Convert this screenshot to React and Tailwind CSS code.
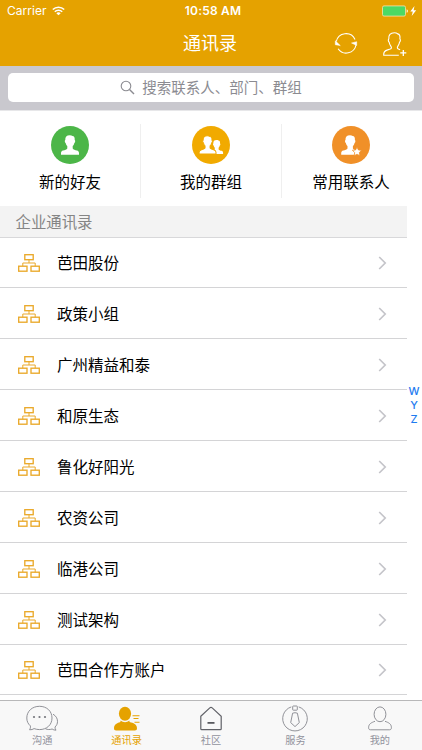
import React from "react";

const departments = ["芭田股份", "政策小组", "广州精益和泰", "和原生态", "鲁化好阳光", "农资公司", "临港公司", "测试架构", "芭田合作方账户"];

const personPath =
  "M18.800 9.300c-3.300 0-4.700 1.700-4.500 4.700-.8.200-.6 2.600.4 3 .2 1.500.8 2.400 1.600 3.100v2.300c-.6 1.100-2.400 1.500-4.200 2-1.400.4-2.100 1.100-2.100 2.700v1.600h18v-1.600c0-1.600-.7-2.300-2.100-2.700-1.800-.5-3.600-.9-4.200-2v-2.300c.8-.7 1.400-1.600 1.600-3.100 1-.4 1.200-2.800.4-3 .2-2.700-.6-3.900-2.200-4-.6-.5-1.500-.7-2.700-.7z";

function StatusBar() {
  return (
    <div className="flex h-[22px] items-center pl-[7px] pr-[5px] text-white">
      <div className="flex w-[161px] items-center">
        <span className="text-[12px] leading-[22px] tracking-[0.050px]">Carrier</span>
        <svg className="ml-[5px]" width="13" height="10" viewBox="0 0 13 10" fill="none" stroke="white" strokeWidth="1.6">
          <path d="M.8 3.500a8.200 8.200 0 0 1 11.400 0" />
          <path d="M2.800 5.700a5.300 5.300 0 0 1 7.400 0" />
          <path d="M6.500 9.300 4.300 7.200a3.200 3.200 0 0 1 4.400 0z" fill="white" stroke="none" />
        </svg>
      </div>
      <span className="w-[90px] text-center text-[12px] font-semibold leading-[22px] tracking-[0.200px]">10:58 AM</span>
      <svg className="ml-auto" width="35" height="12" viewBox="0 0 35 12">
        <rect x=".5" y=".9" width="23" height="10.200" rx="1.500" fill="#4cd964" stroke="#f6e2b0" strokeWidth=".8" />
        <path d="M24.700 4.200c1.500.3 1.500 3.200 0 3.600z" fill="white" />
        <path d="M32.500 1 28.300 6.600h2.500l-1.100 4.400 4.500-5.700h-2.600z" fill="white" />
      </svg>
    </div>
  );
}

function Header() {
  return (
    <header className="h-[66px] bg-[#e5a200]">
      <StatusBar />
      <div className="flex h-[44px] items-center pr-[15px]">
        <div className="w-[114px]" />
        <h1 className="w-[192px] text-center text-[18px] leading-[42px] text-white">通讯录</h1>
        <svg className="ml-[28px]" width="24" height="24" viewBox="0 0 24 24" fill="none" stroke="white" strokeWidth="1.100">
          <path d="M2.300 9.500A9.900 9.900 0 0 1 21 7.400" />
          <path d="M22 13a9.900 9.900 0 0 1-17.900 3.700" />
          <path d="M1.300 8.800v3.900l5 .9zM22.700 13.400v-3.700l-5.200 1.300z" fill="white" strokeWidth=".5" />
        </svg>
        <svg className="ml-auto" width="25" height="26" viewBox="0 0 25 26" fill="none" stroke="white" strokeWidth="1.100">
          <path d="M16.800 24.200H1.700c-.2-3.200.6-4.300 3.300-5.100l3.200-1c1.400-.5 1.600-1.600.6-3-1-1.400-1.500-2.600-1.600-3.900-1.100-.9-1.100-2.500-.4-3.300-.4-3.700 1.500-6.200 5.500-6.200 1.800 0 2.700.4 3.400 1.200 1.900.4 2.600 2.300 2.200 5 .7.800.7 2.400-.4 3.300-.1 1.300-.6 2.500-1.600 3.900-.9 1.400-.7 2.500.6 3l1.600.7" />
          <path d="M21.300 18.900v6M18.300 21.900h6" strokeWidth="1.300" />
        </svg>
      </div>
    </header>
  );
}

function SearchBar() {
  return (
    <div className="h-[44px] bg-[#c9c8ce] pl-[8px] pr-[8px] pt-[7px]">
      <div className="flex h-[29px] items-center justify-center rounded-[5px] bg-white text-[#8b8b91]">
        <svg width="15" height="15" viewBox="0 0 15 15" fill="none" stroke="currentColor" strokeWidth="1.100">
          <circle cx="6" cy="6" r="4.800" />
          <path d="m9.500 9.500 4.500 4.500" strokeWidth="1.400" />
        </svg>
        <span className="ml-[7px] text-[14.500px] leading-[28px]">搜索联系人、部门、群组</span>
      </div>
    </div>
  );
}

function Shortcut({ kind, label }) {
  return (
    <div className="flex w-[140px] flex-col items-center">
      {kind === "friend" && (
        <svg width="38" height="38" viewBox="0 0 38 38">
          <circle cx="19" cy="19" r="19" fill="#4cb648" />
          <path d={personPath} fill="white" />
        </svg>
      )}
      {kind === "group" && (
        <svg width="38" height="38" viewBox="0 0 38 38">
          <circle cx="19" cy="19" r="19" fill="#f1aa00" />
          <path d={personPath} fill="white" transform="translate(11.200 7.500) scale(.71)" />
          <path d={personPath} fill="white" stroke="#f1aa00" strokeWidth="1.100" transform="translate(-2.300 1) scale(.94)" />
        </svg>
      )}
      {kind === "frequent" && (
        <svg width="38" height="38" viewBox="0 0 38 38">
          <circle cx="19" cy="19" r="19" fill="#f09028" />
          <path d={personPath} fill="white" transform="translate(-.8 0)" />
          <path d="m25 21 1.400 2.900 3.200.4-2.300 2.200.6 3.200-2.900-1.500-2.800 1.500.5-3.200-2.300-2.200 3.200-.4z" fill="white" stroke="#f09028" strokeWidth=".8" />
        </svg>
      )}
      <span className="mt-[7px] text-[15.500px] leading-[24px] text-black">{label}</span>
    </div>
  );
}

function Shortcuts() {
  return (
    <div className="flex h-[96px] border-t border-[#e7e7e9] bg-white pt-[15px]">
      <Shortcut kind="friend" label="新的好友" />
      <div className="-mt-[2px] h-[74px] w-px bg-[#efefef]" />
      <Shortcut kind="group" label="我的群组" />
      <div className="-mt-[2px] h-[74px] w-px bg-[#efefef]" />
      <div className="-ml-[1px]">
        <Shortcut kind="frequent" label="常用联系人" />
      </div>
    </div>
  );
}

function DepartmentRow({ name }) {
  return (
    <div className="flex h-[50.880px] items-center border-b border-[#d4d4d6] pl-[18px] pr-[20px] pt-[2px]">
      <svg width="22" height="18" viewBox="0 0 22 18" fill="none" stroke="#eaa92a" strokeWidth="1.350">
        <rect x="6.800" y=".7" width="8.400" height="5" />
        <rect x=".7" y="12.200" width="8.300" height="5" />
        <rect x="13" y="12.200" width="8.300" height="5" />
        <path d="M11 5.700V9M4.800 12.200V9h12.400v3.200" strokeWidth="1" />
      </svg>
      <span className="ml-[17px] pt-[2px] text-[15.500px] leading-[24px] text-black">{name}</span>
      <svg className="ml-auto" width="9" height="14" viewBox="0 0 9 14" fill="none" stroke="#c4c4c9" strokeWidth="1.700">
        <path d="m1.200 1 6 6-6 6" />
      </svg>
    </div>
  );
}

function TabItem({ label, active, children }) {
  return (
    <div className="flex flex-1 flex-col items-center pt-[4px]">
      <svg width="34" height="28" viewBox="0 0 34 28" fill="none" stroke="#85868c" strokeWidth=".9">
        {children}
      </svg>
      <span className={active ? "text-[10.200px] leading-[14px] text-[#e5a200]" : "text-[10.200px] leading-[14px] text-[#92939d]"}>{label}</span>
    </div>
  );
}

function TabBar() {
  return (
    <nav className="flex h-[50px] shrink-0 border-t border-[#b8b8b9] bg-[#f8f8f8]">
      <TabItem label="沟通">
        <path d="M4.600 24.800c.8-1.500 1-2.400.8-3.900C3 18.800 1.800 16.200 1.800 13 1.800 6.200 7.200 1.300 14.500 1.300S27 6.200 27 13s-5.200 11.600-12.500 11.600c-2 0-3.700-.4-5.400-1-1.300.8-2.800 1.300-4.500 1.200z" />
        <path d="M28 9.200c2.800 1.500 4.500 4.200 4.500 7.100 0 2.400-.8 4.200-2.500 5.700 0 1.300.3 2.200 1 3.200-1.500 0-2.800-.4-3.900-1.200-2.300.8-4.500.7-6.600-.2" />
        <g fill="#75767c" stroke="none"><circle cx="9" cy="12" r="1.100" /><circle cx="14.500" cy="12" r="1.100" /><circle cx="20" cy="12" r="1.100" /></g>
      </TabItem>
      <TabItem label="通讯录" active>
        <g fill="#e5a200" stroke="none">
          <ellipse cx="15" cy="8.800" rx="6.100" ry="7" />
          <path d="M10.700 15.600c2.600 2.100 6.100 2.100 8.600 0l.3 1.500c3.800 1 7.400 2.200 7.400 6.100 0 1.800-.7 2.200-2.200 2.200H6.200C4.700 25.400 4 25 4 23.200c0-3.900 3.300-5 6.300-6.100z" />
        </g>
        <path d="M22.500 10.700h7M23.500 13.500h5M24.500 17.200h5" stroke="#e5a200" strokeWidth="1.100" />
      </TabItem>
      <TabItem label="社区">
        <path d="M6.800 11.200 15.800 2.900q1.200-1 2.400 0l9 8.300v12.600q0 .9-.9.900H7.700q-.9 0-.9-.9z" stroke="#606167" strokeWidth="1.200" />
        <path d="M13.500 17.900h7" stroke="#46474c" strokeWidth="1.600" />
      </TabItem>
      <TabItem label="服务">
        <path d="M13.300 1.900a12.300 12.300 0 1 0 7.400 0" />
        <rect x="14.700" y="1" width="4.600" height="4.200" rx=".6" />
        <path d="m14.600 8.200-1.900 9.400 4.300 4 4.300-4-1.900-9.400q-2.400-1-4.800 0z" />
      </TabItem>
      <TabItem label="我的">
        <ellipse cx="17" cy="9.300" rx="5.900" ry="7.400" />
        <path d="M12 16.300c-3.700 1.300-6.400 2.600-6.400 6.300 0 1.500.6 2.200 2 2.200h18.800c1.400 0 2-.7 2-2.200 0-3.700-2.700-5-6.400-6.300" />
      </TabItem>
    </nav>
  );
}

export default function App() {
  return (
    <div className="flex h-[750px] w-[422px] flex-col overflow-hidden bg-white font-['Inter','Noto_Sans_CJK_SC',sans-serif]">
      <Header />
      <SearchBar />
      <Shortcuts />
      <main className="flex h-[494px] shrink-0">
        <div className="w-[407px] shrink-0">
          <div className="h-[31.500px] border-b border-[#d8d8da] bg-[#f3f3f3] pl-[15.500px] text-[15.400px] leading-[34px] text-[#858585]">企业通讯录</div>
          {departments.map((name) => <DepartmentRow key={name} name={name} />)}
        </div>
        <div className="flex w-[14px] flex-col items-center pt-[178px] text-[11px] font-medium leading-[14px] text-[#1f7cf0]">
          <span>W</span><span>Y</span><span>Z</span>
        </div>
      </main>
      <TabBar />
    </div>
  );
}
